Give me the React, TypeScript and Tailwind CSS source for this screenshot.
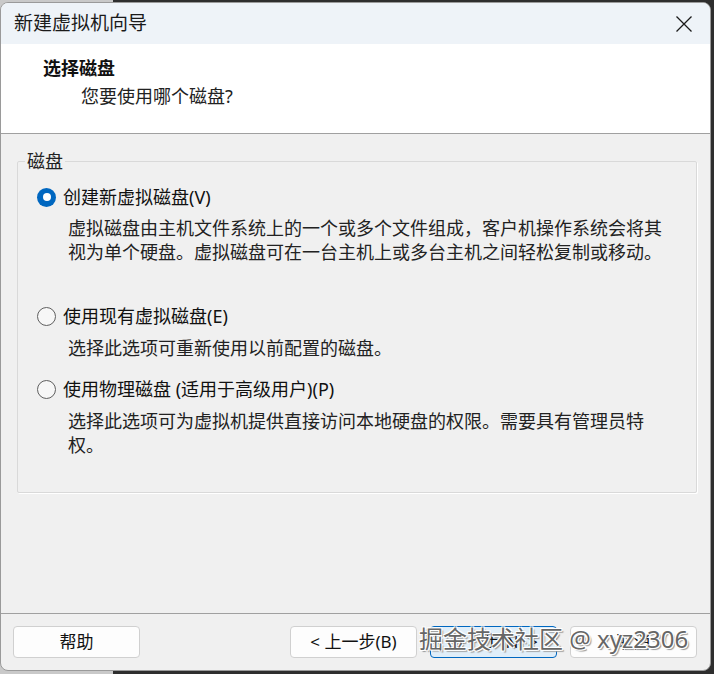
import { useState } from "react";

const font = { fontFamily: '"Noto Sans", "Noto Sans CJK SC", sans-serif' };

const Radio = ({ checked }: { checked: boolean }) =>
    checked ? (
        <span className="w-[19px] h-[19px] rounded-full bg-[#0067c0] flex items-center justify-center shrink-0">
            <span className="w-[8px] h-[8px] rounded-full bg-white" />
        </span>
    ) : (
        <span className="w-[19px] h-[19px] rounded-full border border-[#5f5f5f] bg-[#f7f7f7] shrink-0" />
    );

const Option = ({ checked, label, onPick }: { checked: boolean; label: string; onPick: () => void }) => (
    <div className="flex items-center h-[24px] pl-[19px] gap-[7px] cursor-default" onClick={onPick}>
        <Radio checked={checked} />
        <span className="text-[18px] leading-[24px] text-[#111]">{label}</span>
    </div>
);

const Btn = ({ text, focus }: { text: string; focus?: boolean }) => (
    <button
        className={
            focus
                ? "w-[127px] h-[32px] rounded-[4px] border border-[#0067c0] bg-[#e0eef9] text-[17px] text-[#111]"
                : "w-[127px] h-[32px] rounded-[4px] border border-[#d0d0d0] bg-[#fdfdfd] text-[17px] text-[#111]"
        }
    >
        {text}
    </button>
);

const App = () => {
    const [pick, setPick] = useState(0);

    return (
        <div
            className="relative w-[714px] h-[674px] overflow-hidden bg-[linear-gradient(to_right,#c9c9c9_113px,#2e2e2e_113px)]"
            style={font}
        >
            <div className="w-[711px] h-[669px] mt-[2px] border border-[#9a9a9a] rounded-[8px] overflow-hidden flex flex-col bg-[#f0f0f0]">
                {/* title bar */}
                <div className="h-[41px] bg-[#eef3f8] flex items-center justify-between pl-[13px] pr-[16px]">
                    <span className="text-[19px] text-[#1a1a1a]">新建虚拟机向导</span>
                    <svg width="18" height="18" viewBox="0 0 18 18" className="mr-[1px]">
                        <path d="M1.5 1.5 L16.5 16.5 M16.5 1.5 L1.5 16.5" stroke="#1a1a1a" strokeWidth="1.3" fill="none" />
                    </svg>
                </div>

                {/* header */}
                <div className="h-[90px] bg-white border-b border-[#a0a0a0] pt-[12px] pl-[42px]">
                    <div className="text-[18px] leading-[24px] font-bold text-[#111]">选择磁盘</div>
                    <div className="text-[18px] leading-[24px] mt-[4px] ml-[38px] text-[#222]">您要使用哪个磁盘?</div>
                </div>

                {/* body */}
                <div className="flex-1 pt-[17px] pl-[16px]">
                    <fieldset className="w-[680px] h-[342px] border border-[#d9d9d9] rounded-[2px] shadow-[1px_1px_0_#ffffff]">
                        <legend className="ml-[7px] px-[2px] text-[18px] leading-[20px] text-[#222]">磁盘</legend>

                        <div className="mt-[14px]">
                            <Option checked={pick === 0} label="创建新虚拟磁盘(V)" onPick={() => setPick(0)} />
                        </div>
                        <p className="mt-[7px] pl-[50px] text-[18px] leading-[24px] text-[#222]">
                            虚拟磁盘由主机文件系统上的一个或多个文件组成，客户机操作系统会将其
                            <br />
                            视为单个硬盘。虚拟磁盘可在一台主机上或多台主机之间轻松复制或移动。
                        </p>

                        <div className="mt-[40px]">
                            <Option checked={pick === 1} label="使用现有虚拟磁盘(E)" onPick={() => setPick(1)} />
                        </div>
                        <p className="mt-[8px] pl-[50px] text-[18px] leading-[24px] text-[#222]">
                            选择此选项可重新使用以前配置的磁盘。
                        </p>

                        <div className="mt-[17px]">
                            <Option checked={pick === 2} label="使用物理磁盘 (适用于高级用户)(P)" onPick={() => setPick(2)} />
                        </div>
                        <p className="mt-[8px] pl-[50px] text-[18px] leading-[24px] text-[#222]">
                            选择此选项可为虚拟机提供直接访问本地硬盘的权限。需要具有管理员特
                            <br />
                            权。
                        </p>
                    </fieldset>
                </div>

                {/* footer */}
                <div className="h-[57px] border-t border-[#a0a0a0] pt-[12px] pl-[12px] flex items-start">
                    <Btn text="帮助" />
                    <div className="ml-[150px] flex gap-[13px]">
                        <Btn text="< 上一步(B)" />
                        <Btn text="下一步(N) >" focus />
                        <Btn text="取消" />
                    </div>
                </div>
            </div>

            {/* watermark */}
            <div className="absolute left-[419px] top-[623px] text-[24px] leading-[32px] text-[#666] whitespace-nowrap pointer-events-none [text-shadow:1px_1px_0_#fff,-1px_-1px_0_#fff,1px_-1px_0_#fff,-1px_1px_0_#fff,2px_2px_1px_#999]">
                掘金技术社区 @ xyz2306
            </div>
        </div>
    );
};

export default App;
